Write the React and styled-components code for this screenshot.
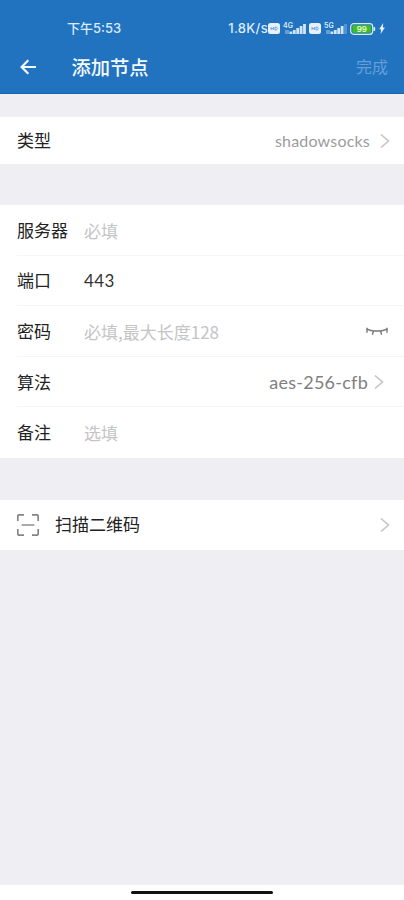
import React from 'react';
import styled, { createGlobalStyle } from 'styled-components';

const GlobalStyle = createGlobalStyle`
    * {
        box-sizing: border-box;
    }
    body {
        margin: 0;
        background: #efeef3;
        font-family: "Noto Sans CJK SC", sans-serif;
    }
`;

const Screen = styled.div`
    display: flex;
    flex-direction: column;
    width: 404px;
    height: 900px;
    overflow: hidden;
    background: #efeef3;
`;

const Header = styled.header`
    height: 94px;
    flex: none;
    background: #2173c0;
    border-bottom: 1px solid #1467b5;
    color: #f4f9ff;
`;

const StatusBar = styled.div`
    display: flex;
    align-items: center;
    height: 40px;
    padding: 17px 19px 0 67px;
`;

const StatusText = styled.span`
    flex: ${props => props.$grow ? 1 : 'none'};
    padding-bottom: 1px;
    font-family: ${props => props.$latin ? 'Inter, sans-serif' : 'Inter, "Noto Sans CJK SC", sans-serif'};
    font-size: 13px;
    line-height: 20px;
    font-weight: 500;
    letter-spacing: ${props => props.$spacing || 0}px;
    white-space: nowrap;
    color: #dcebfb;
`;

const StatusIcons = styled.div`
    display: flex;
    align-items: center;
    flex: none;
    width: 117px;
    justify-content: space-between;

    svg {
        display: block;
    }
`;

const TitleBar = styled.div`
    display: flex;
    align-items: center;
    height: 53px;
    padding: 0 16px 0 20px;
`;

const Title = styled.h1`
    flex: 1;
    margin: 0 0 0 34.5px;
    font-size: 19.3px;
    line-height: 28px;
    font-weight: 500;
`;

const Done = styled.span`
    padding-bottom: 2px;
    font-size: 16px;
    line-height: 24px;
    color: #639fd8;
`;

const Group = styled.section`
    flex: none;
    margin-top: ${props => props.$top}px;
    background: #fff;
`;

const Row = styled.div`
    display: flex;
    align-items: center;
    height: ${props => props.$height || 50.6}px;
    padding: 0 ${props => props.$right || 14}px 0 17px;
    background: linear-gradient(#f5f5f6, #f5f5f6) 17px 100% / ${props => props.$line ? '100% 1px' : '0 0'} no-repeat;
`;

const Label = styled.span`
    width: 67px;
    flex: none;
    padding-bottom: 2px;
    font-size: 17px;
    line-height: 25px;
    color: #222;
    font-weight: 400;
`;

const Field = styled.span`
    flex: 1;
    font-family: ${props => props.$filled ? 'Lato' : '"Noto Sans CJK SC"'}, sans-serif;
    font-size: 17px;
    line-height: 25px;
    letter-spacing: ${props => props.$spacing || 0}px;
    color: ${props => props.$filled ? '#333' : '#c4c4c6'};
`;

const Value = styled.span`
    margin-left: auto;
    margin-right: ${props => props.$gap}px;
    font-family: Lato, sans-serif;
    font-size: ${props => props.$size}px;
    line-height: 24px;
    letter-spacing: ${props => props.$spacing}px;
    color: ${props => props.$color};
`;

const ScanLabel = styled.span`
    flex: 1;
    margin-left: 16px;
    padding-bottom: 2px;
    font-size: 17px;
    line-height: 25px;
    color: #222;
`;

const BottomBar = styled.footer`
    display: flex;
    justify-content: center;
    height: 15px;
    margin-top: auto;
    padding-top: 6px;
    background: #fff;
`;

const HomeIndicator = styled.div`
    width: 142px;
    height: 3px;
    border-radius: 2px;
    background: #111;
`;

const Chevron = ({ color = '#c4c4c6' }) => (
    <svg width="10" height="16" viewBox="0 0 10 16" fill="none" stroke={color} strokeWidth="1.6">
        <path d="M1 1.5 8.5 8 1 14.5" />
    </svg>
);

const BackIcon = () => (
    <svg width="17" height="16" viewBox="0 0 17 16" fill="none" stroke="#f4f9ff" strokeWidth="2.2">
        <path d="M16 8H2M8.3 1.2 1.6 8l6.7 6.8" />
    </svg>
);

const HdBadge = () => (
    <svg width="12" height="11" viewBox="0 0 12 11">
        <rect width="12" height="11" rx="2.5" fill="#e6f1fc" />
        <path d="M3 4v3M3 5.5h2.4M5.4 4v3M7 4v3h1c1.7 0 1.7-3 0-3z" fill="none" stroke="#6a9fd3" strokeWidth=".9" />
    </svg>
);

const Signal = ({ label, weak }) => (
    <svg width="23" height="13" viewBox="0 0 23 13">
        <text x="0" y="6" fontFamily="Inter, sans-serif" fontSize="7" fontWeight="600" fill="#dcebfb">{label}</text>
        <path d="M3 8v4M5 8v4" stroke="#a8caeb" strokeWidth="1" />
        <g fill="#d3e5f8">
            <rect x="6.5" y="9.5" width="2.8" height="2.5" />
            <rect x="9.9" y="8" width="2.8" height="4" />
            <rect x="13.3" y="6" width="2.8" height="6" />
            <rect x="16.7" y="4" width="2.8" height="8" />
            <rect x="20.1" y="2" width="2.8" height="10" opacity={weak ? 0.3 : 1} />
        </g>
    </svg>
);

const Battery = () => (
    <svg width="26" height="12" viewBox="0 0 26 12">
        <rect x=".7" y=".7" width="22" height="10.6" rx="3" fill="#247cad" stroke="#d6e9f5" strokeWidth="1.2" />
        <rect x="2.4" y="2.3" width="18.6" height="7.4" rx="1.3" fill="#43bd25" />
        <rect x="23.4" y="4" width="1.8" height="4" rx=".8" fill="#d6e9f5" />
        <text x="11.8" y="8.9" textAnchor="middle" fontFamily="Inter, sans-serif" fontSize="8" fontWeight="600" fill="#e9ffdc">99</text>
    </svg>
);

const Bolt = () => (
    <svg width="6" height="11" viewBox="0 0 6 11">
        <path d="M4.2 0 .2 6.2h1.9L1.6 11 5.9 4.6H3.8z" fill="#e6f1fc" />
    </svg>
);

const ClosedEye = () => (
    <svg width="22" height="9" viewBox="0 0 22 9" fill="none" stroke="#777" strokeWidth="1.4">
        <path d="M.5 1.6C5 4.8 17 4.8 21.5 1.6M1 .8v5M7.4 4 6.4 7.8M14.6 4l1 3.8M21 .8v5" />
    </svg>
);

const ScanIcon = () => (
    <svg width="22" height="22" viewBox="0 0 22 22" fill="none" stroke="#858585" strokeWidth="1.7">
        <path d="M.8 7V2.5Q.8.8 2.5.8H7M15 .8h4.5q1.7 0 1.7 1.7V7M21.2 15v4.5q0 1.7-1.7 1.7H15M7 21.2H2.5Q.8 21.2.8 19.5V15" />
        <path d="M4.5 11h13" stroke="#aaa" strokeWidth="2" />
    </svg>
);

const App = () => {

    return (
        <Screen>
            <GlobalStyle />
            <Header>
                <StatusBar>
                    <StatusText $grow>下午5:53</StatusText>
                    <StatusText $latin $spacing={0.3}>1.8K/s</StatusText>
                    <StatusIcons>
                        <HdBadge />
                        <Signal label="4G" />
                        <HdBadge />
                        <Signal label="5G" weak />
                        <Battery />
                        <Bolt />
                    </StatusIcons>
                </StatusBar>
                <TitleBar>
                    <BackIcon />
                    <Title>添加节点</Title>
                    <Done>完成</Done>
                </TitleBar>
            </Header>

            <Group $top={23}>
                <Row $height={47}>
                    <Label>类型</Label>
                    <Value $size={16} $spacing={0.2} $gap={10} $color="#9c9c9c">shadowsocks</Value>
                    <Chevron />
                </Row>
            </Group>

            <Group $top={41}>
                <Row $line>
                    <Label>服务器</Label>
                    <Field>必填</Field>
                </Row>
                <Row $line>
                    <Label>端口</Label>
                    <Field $filled $spacing={0.4}>443</Field>
                </Row>
                <Row $line $right={16}>
                    <Label>密码</Label>
                    <Field>必填,最大长度128</Field>
                    <ClosedEye />
                </Row>
                <Row $line $right={20}>
                    <Label>算法</Label>
                    <Value $size={18} $spacing={0.25} $gap={6} $color="#808080">aes-256-cfb</Value>
                    <Chevron />
                </Row>
                <Row>
                    <Label>备注</Label>
                    <Field>选填</Field>
                </Row>
            </Group>

            <Group $top={42}>
                <Row $height={50}>
                    <ScanIcon />
                    <ScanLabel>扫描二维码</ScanLabel>
                    <Chevron />
                </Row>
            </Group>

            <BottomBar>
                <HomeIndicator />
            </BottomBar>
        </Screen>
    )
}

export default App;
